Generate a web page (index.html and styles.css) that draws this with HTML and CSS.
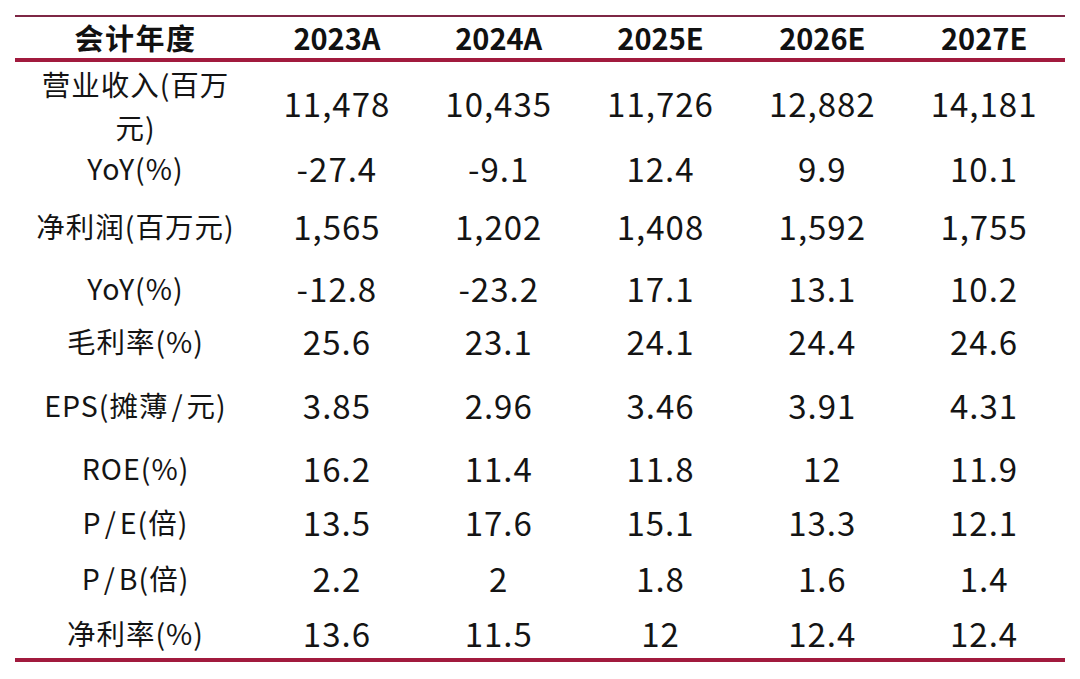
FILE: index.html
```html
<!DOCTYPE html>
<html lang="zh-CN">
<head>
<meta charset="utf-8">
<link rel="stylesheet" href="styles.css">
</head>
<body>
<div class="wrap">
  <table class="fin">
    <thead>
      <tr class="head">
        <th class="lbl">会计年度</th><th>2023A</th><th>2024A</th><th>2025E</th><th>2026E</th><th>2027E</th>
      </tr>
    </thead>
    <tbody>
      <tr class="r1"><td class="lbl two">营业收入(百万<br>元)</td><td>11,478</td><td>10,435</td><td>11,726</td><td>12,882</td><td>14,181</td></tr>
      <tr class="r2"><td class="lbl">YoY(%)</td><td>-27.4</td><td>-9.1</td><td>12.4</td><td>9.9</td><td>10.1</td></tr>
      <tr class="r3"><td class="lbl">净利润(百万元)</td><td>1,565</td><td>1,202</td><td>1,408</td><td>1,592</td><td>1,755</td></tr>
      <tr class="r4"><td class="lbl">YoY(%)</td><td>-12.8</td><td>-23.2</td><td>17.1</td><td>13.1</td><td>10.2</td></tr>
      <tr class="r5"><td class="lbl">毛利率(%)</td><td>25.6</td><td>23.1</td><td>24.1</td><td>24.4</td><td>24.6</td></tr>
      <tr class="r6"><td class="lbl">EPS(摊薄<span class="sl">/</span>元)</td><td>3.85</td><td>2.96</td><td>3.46</td><td>3.91</td><td>4.31</td></tr>
      <tr class="r7"><td class="lbl">ROE(%)</td><td>16.2</td><td>11.4</td><td>11.8</td><td>12</td><td>11.9</td></tr>
      <tr class="r8"><td class="lbl">P<span class="sl">/</span>E(倍)</td><td>13.5</td><td>17.6</td><td>15.1</td><td>13.3</td><td>12.1</td></tr>
      <tr class="r9"><td class="lbl">P<span class="sl">/</span>B(倍)</td><td>2.2</td><td>2</td><td>1.8</td><td>1.6</td><td>1.4</td></tr>
      <tr class="r10"><td class="lbl">净利率(%)</td><td>13.6</td><td>11.5</td><td>12</td><td>12.4</td><td>12.4</td></tr>
    </tbody>
  </table>
</div>
</body>
</html>
```
FILE: styles.css
```css
html, body {
  margin: 0;
  padding: 0;
  background: #ffffff;
}
.wrap {
  padding: 15px 15px 0 15px;
}
.fin {
  width: 1050px;
  border-collapse: collapse;
  table-layout: fixed;
  font-family: "Noto Sans CJK SC", "Noto Sans", sans-serif;
  color: #141414;
  border-top: 2px solid #7e2745;
  border-bottom: 4px solid #a11a3e;
}
.fin th, .fin td {
  padding: 0;
  text-align: center;
  vertical-align: middle;
  white-space: nowrap;
}
.fin th {
  font-size: 29px;
  font-weight: 700;
  line-height: 41px;
  color: #111;
}
.fin th.lbl {
  width: 241px;
  letter-spacing: 1.5px;
}
.head {
  height: 41px;
  border-bottom: 4px solid #a11a3e;
}
.fin td {
  font-size: 33px;
  line-height: 40px;
  letter-spacing: 1px;
  padding-bottom: 4px;
}
.fin td.lbl {
  font-size: 28.5px;
  letter-spacing: 1px;
}
.fin td.two {
  line-height: 43px;
  padding-bottom: 0;
}
.fin .r10 td {
  padding-bottom: 0;
}
.sl {
  margin: 0 3px;
}
.r1 { height: 86px; }
.r2 { height: 44px; }
.r3 { height: 72px; }
.r4 { height: 52px; }
.r5 { height: 54px; }
.r6 { height: 74px; }
.r7 { height: 52px; }
.r8 { height: 56px; }
.r9 { height: 56px; }
.r10 { height: 52px; }
```
